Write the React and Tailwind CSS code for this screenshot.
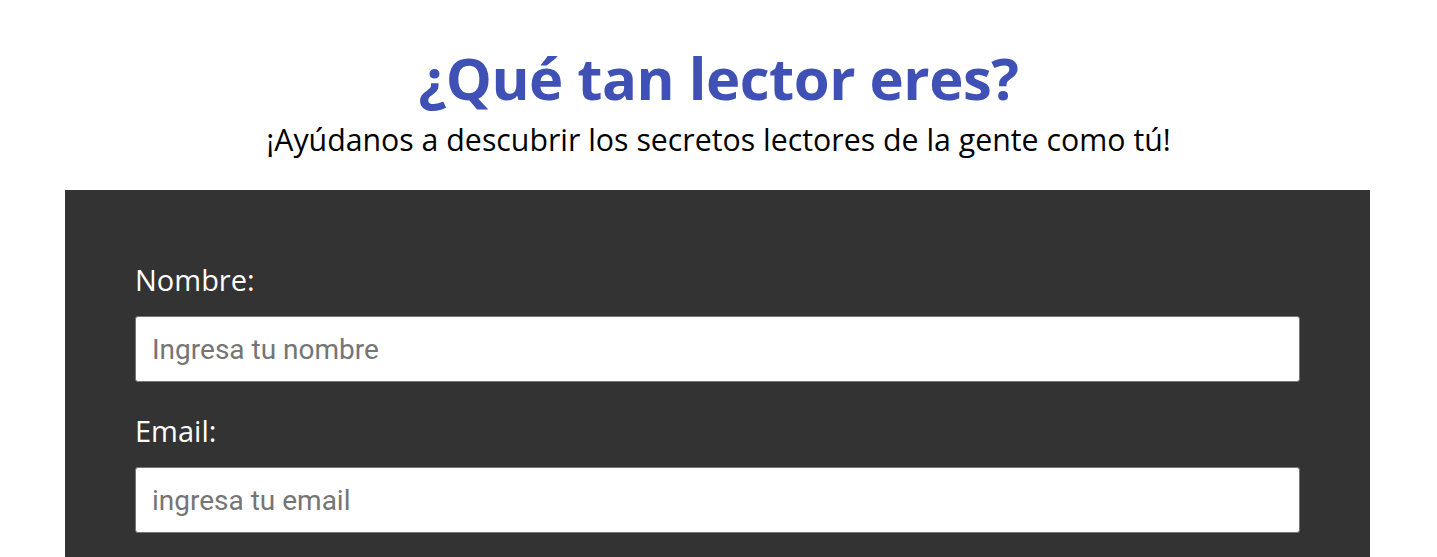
export default function App() {
  return (
    <div className="min-h-screen bg-white font-['Open_Sans',sans-serif]">
      {/* Heading */}
      <header className="pt-[38px] text-center">
        <h1 className="text-[58px] leading-[80px] font-bold text-[#3f51b5] tracking-[-0.5px]">
          ¿Qué tan lector eres?
        </h1>
        <p className="text-[30.3px] leading-[36px] text-black mt-[4px]">
          ¡Ayúdanos a descubrir los secretos lectores de la gente como tú!
        </p>
      </header>

      {/* Form */}
      <form className="mt-[32px] ml-[65px] mr-[67px] bg-[#333333] px-[70px] pt-[72px] pb-[40px]">
        <div className="flex flex-col">
          <label className="text-[29px] leading-[36px] text-white mb-[18px]">
            Nombre:
          </label>
          <input
            type="text"
            placeholder="Ingresa tu nombre"
            className="h-[66px] w-full rounded-[3px] border border-[#767676] bg-white px-4 font-['Roboto',sans-serif] text-[28px] text-black placeholder:text-[#757575] outline-none"
          />
        </div>
        <div className="flex flex-col mt-[31px]">
          <label className="text-[29px] leading-[36px] text-white mb-[18px]">
            Email:
          </label>
          <input
            type="email"
            placeholder="ingresa tu email"
            className="h-[66px] w-full rounded-[3px] border border-[#767676] bg-white px-4 font-['Roboto',sans-serif] text-[28px] text-black placeholder:text-[#757575] outline-none"
          />
        </div>
      </form>
    </div>
  );
}
